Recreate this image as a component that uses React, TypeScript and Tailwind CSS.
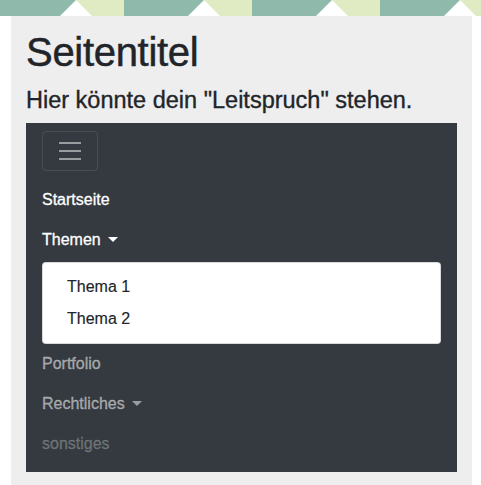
import React from "react";

const links = [
  { label: "Startseite", tone: "text-white" },
];

function Caret() {
  return (
    <span className="ml-[7px] inline-block h-0 w-0 border-x-[5px] border-t-[5px] border-x-transparent border-t-current align-[3px]" />
  );
}

function Banner() {
  return (
    <svg width="481" height="16" className="block">
      <defs>
        <pattern id="peaks" x="-4" y="0" width="128" height="16" patternUnits="userSpaceOnUse">
          <rect x="0" y="0" width="80" height="16" fill="#8fbaab" />
          <rect x="80" y="0" width="48" height="16" fill="#e0eac3" />
          <polygon points="64,16 80,0 96,16" fill="#ffffff" />
        </pattern>
      </defs>
      <rect width="481" height="16" fill="url(#peaks)" />
    </svg>
  );
}

export default function App() {
  return (
    <div className="h-[485px] overflow-hidden bg-white font-['Liberation_Sans',Arial,sans-serif] text-[#212529]">
      <Banner />
      <div className="ml-[11px] w-[461px] bg-[#eeeeee] px-[15px] pb-6 pt-3">
        <h1 className="text-[40px] leading-[48px] tracking-[-0.3px] [-webkit-text-stroke:0.5px]">Seitentitel</h1>
        <h4 className="mt-[10px] mb-2 text-[23.5px] leading-[29px] [-webkit-text-stroke:0.35px]">
          Hier könnte dein "Leitspruch" stehen.
        </h4>

        <nav className="bg-[#343a40] px-4 py-2">
          <button className="flex h-10 w-14 items-center justify-center rounded border border-white/10">
            <svg width="30" height="30" viewBox="0 0 30 30">
              <path d="M4 7h22M4 15h22M4 23h22" stroke="rgba(255,255,255,0.5)" strokeWidth="2" />
            </svg>
          </button>

          <ul className="mt-[9px] flex flex-col text-base leading-6 [-webkit-text-stroke:0.3px]">
            {links.map((l) => (
              <li key={l.label} className={`py-2 ${l.tone}`}>{l.label}</li>
            ))}
            <li className="py-2 text-white">
              Themen
              <Caret />
            </li>
            <li>
              <div className="mt-[2px] rounded border border-black/15 bg-white py-2 text-[#212529] [-webkit-text-stroke:0.15px]">
                <div className="px-6 py-1">Thema 1</div>
                <div className="px-6 py-1">Thema 2</div>
              </div>
            </li>
            <li className="py-2 text-white/50">Portfolio</li>
            <li className="py-2 text-white/50">
              Rechtliches
              <Caret />
            </li>
            <li className="py-2 text-white/25">sonstiges</li>
          </ul>
        </nav>
      </div>
    </div>
  );
}
